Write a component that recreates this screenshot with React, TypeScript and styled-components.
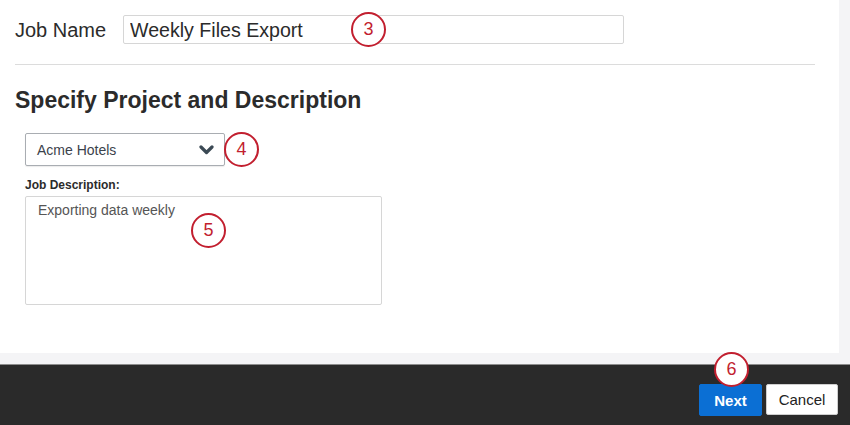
import React from 'react';
import styled, { createGlobalStyle } from 'styled-components';

const GlobalStyle = createGlobalStyle`
  html, body {
    margin: 0;
    padding: 0;
    background: #f4f4f6;
    font-family: "Liberation Sans", Arial, sans-serif;
  }
  * {
    box-sizing: border-box;
  }
`;

const Page = styled.div`
  width: 850px;
  height: 425px;
  display: flex;
  flex-direction: column;
  background: #f4f4f6;
  overflow: hidden;
`;

const Main = styled.div`
  height: 353px;
  padding-right: 11px;
  flex-shrink: 0;
`;

const Panel = styled.div`
  height: 100%;
  background: #ffffff;
  padding: 15px 24px 0 15px;
  display: flex;
  flex-direction: column;
`;

const Row = styled.div`
  display: flex;
  align-items: center;
`;

const Label = styled.label`
  font-size: 20px;
  color: #2b2b2b;
  width: 108px;
  padding-top: 2px;
`;

const FieldWrap = styled.div<{ $width: number; $height: number }>`
  position: relative;
  width: ${(p) => p.$width}px;
  height: ${(p) => p.$height}px;
`;

const TextInput = styled.input`
  width: 100%;
  height: 100%;
  border: 1px solid #d6d6d6;
  border-radius: 2px;
  padding: 2px 6px 0;
  font-family: "Liberation Sans", Arial, sans-serif;
  font-size: 19.6px;
  color: #2b2b2b;
  outline: none;
`;

const Divider = styled.hr`
  margin: 20px 0 0 0;
  border: none;
  border-top: 1px solid #dcdcdc;
  height: 0;
`;

const Heading = styled.h2`
  margin: 21px 0 0 0;
  font-size: 23px;
  line-height: 28px;
  font-weight: 700;
  color: #2b2b2b;
`;

const Section = styled.div`
  padding-left: 10px;
  display: flex;
  flex-direction: column;
`;

const SelectRow = styled.div`
  margin-top: 18px;
  display: flex;
  align-items: center;
`;

const SelectBox = styled.div`
  width: 200px;
  height: 33px;
  border: 1px solid #a9adb2;
  border-radius: 2px;
  display: flex;
  align-items: center;
  justify-content: space-between;
  padding: 0 10px 0 11px;
  font-size: 14px;
  color: #3b424b;
  box-shadow: 0 1px 1px rgba(0, 0, 0, 0.08);
`;

const SmallLabel = styled.div`
  margin-top: 11px;
  font-size: 12px;
  line-height: 15px;
  font-weight: 700;
  color: #2b2b2b;
`;

const DescArea = styled.textarea`
  margin-top: 3px;
  width: 357px;
  height: 109px;
  border: 1px solid #d6d6d6;
  border-radius: 2px;
  padding: 5px 12px;
  font-family: "Liberation Sans", Arial, sans-serif;
  font-size: 14px;
  color: #555;
  resize: none;
  outline: none;
  display: block;
`;

const Footer = styled.div`
  margin-top: 11px;
  flex: 1;
  background: #2a2a2a;
  border-top: 1px solid #8d8d8d;
  display: flex;
  justify-content: flex-end;
  align-items: flex-start;
  gap: 4px;
  padding: 19px 12px 0 0;
`;

const Button = styled.button<{ $primary?: boolean }>`
  position: relative;
  height: ${(p) => (p.$primary ? 32 : 31)}px;
  width: ${(p) => (p.$primary ? 63 : 72)}px;
  border-radius: 2px;
  font-family: "Liberation Sans", Arial, sans-serif;
  font-size: 15px;
  font-weight: ${(p) => (p.$primary ? 700 : 400)};
  color: ${(p) => (p.$primary ? '#ffffff' : '#222222')};
  background: ${(p) => (p.$primary ? '#0b6fd4' : '#ffffff')};
  border: 1px solid ${(p) => (p.$primary ? '#0b6fd4' : '#cfcfcf')};
  padding: 0;
  cursor: pointer;
`;

const Marker = styled.span<{ $x: number; $y: number }>`
  position: absolute;
  left: ${(p) => p.$x}px;
  top: ${(p) => p.$y}px;
  width: 35px;
  height: 35px;
  border-radius: 50%;
  border: 2.5px solid #c21f2f;
  background: #ffffff;
  color: #c21f2f;
  font-family: "Liberation Sans", Arial, sans-serif;
  font-size: 18px;
  font-weight: 400;
  display: flex;
  align-items: center;
  justify-content: center;
  pointer-events: none;
`;

const InlineMarker = styled.span`
  width: 35px;
  height: 35px;
  margin-left: -1px;
  border-radius: 50%;
  border: 2.5px solid #c21f2f;
  background: #ffffff;
  color: #c21f2f;
  font-size: 18px;
  display: flex;
  align-items: center;
  justify-content: center;
`;

const Chevron = () => (
  <svg width="15" height="10" viewBox="0 0 15 10">
    <polyline
      points="2,2 7.5,7.5 13,2"
      fill="none"
      stroke="#3b4954"
      strokeWidth="3.2"
      strokeLinecap="round"
      strokeLinejoin="round"
    />
  </svg>
);

const App: React.FC = () => {
  return (
    <>
      <GlobalStyle />
      <Page>
        <Main>
          <Panel>
            <Row>
              <Label>Job Name</Label>
              <FieldWrap $width={501} $height={29}>
                <TextInput defaultValue="Weekly Files Export" readOnly />
                <Marker $x={228} $y={-3}>3</Marker>
              </FieldWrap>
            </Row>
            <Divider />
            <Heading>Specify Project and Description</Heading>
            <Section>
              <SelectRow>
                <SelectBox>
                  <span>Acme Hotels</span>
                  <Chevron />
                </SelectBox>
                <InlineMarker>4</InlineMarker>
              </SelectRow>
              <SmallLabel>Job Description:</SmallLabel>
              <FieldWrap $width={357} $height={112}>
                <DescArea defaultValue="Exporting data weekly" readOnly />
                <Marker $x={166} $y={20}>5</Marker>
              </FieldWrap>
            </Section>
          </Panel>
        </Main>
        <Footer>
          <Button $primary>
            Next
            <Marker $x={14} $y={-33}>6</Marker>
          </Button>
          <Button>Cancel</Button>
        </Footer>
      </Page>
    </>
  );
};

export default App;
